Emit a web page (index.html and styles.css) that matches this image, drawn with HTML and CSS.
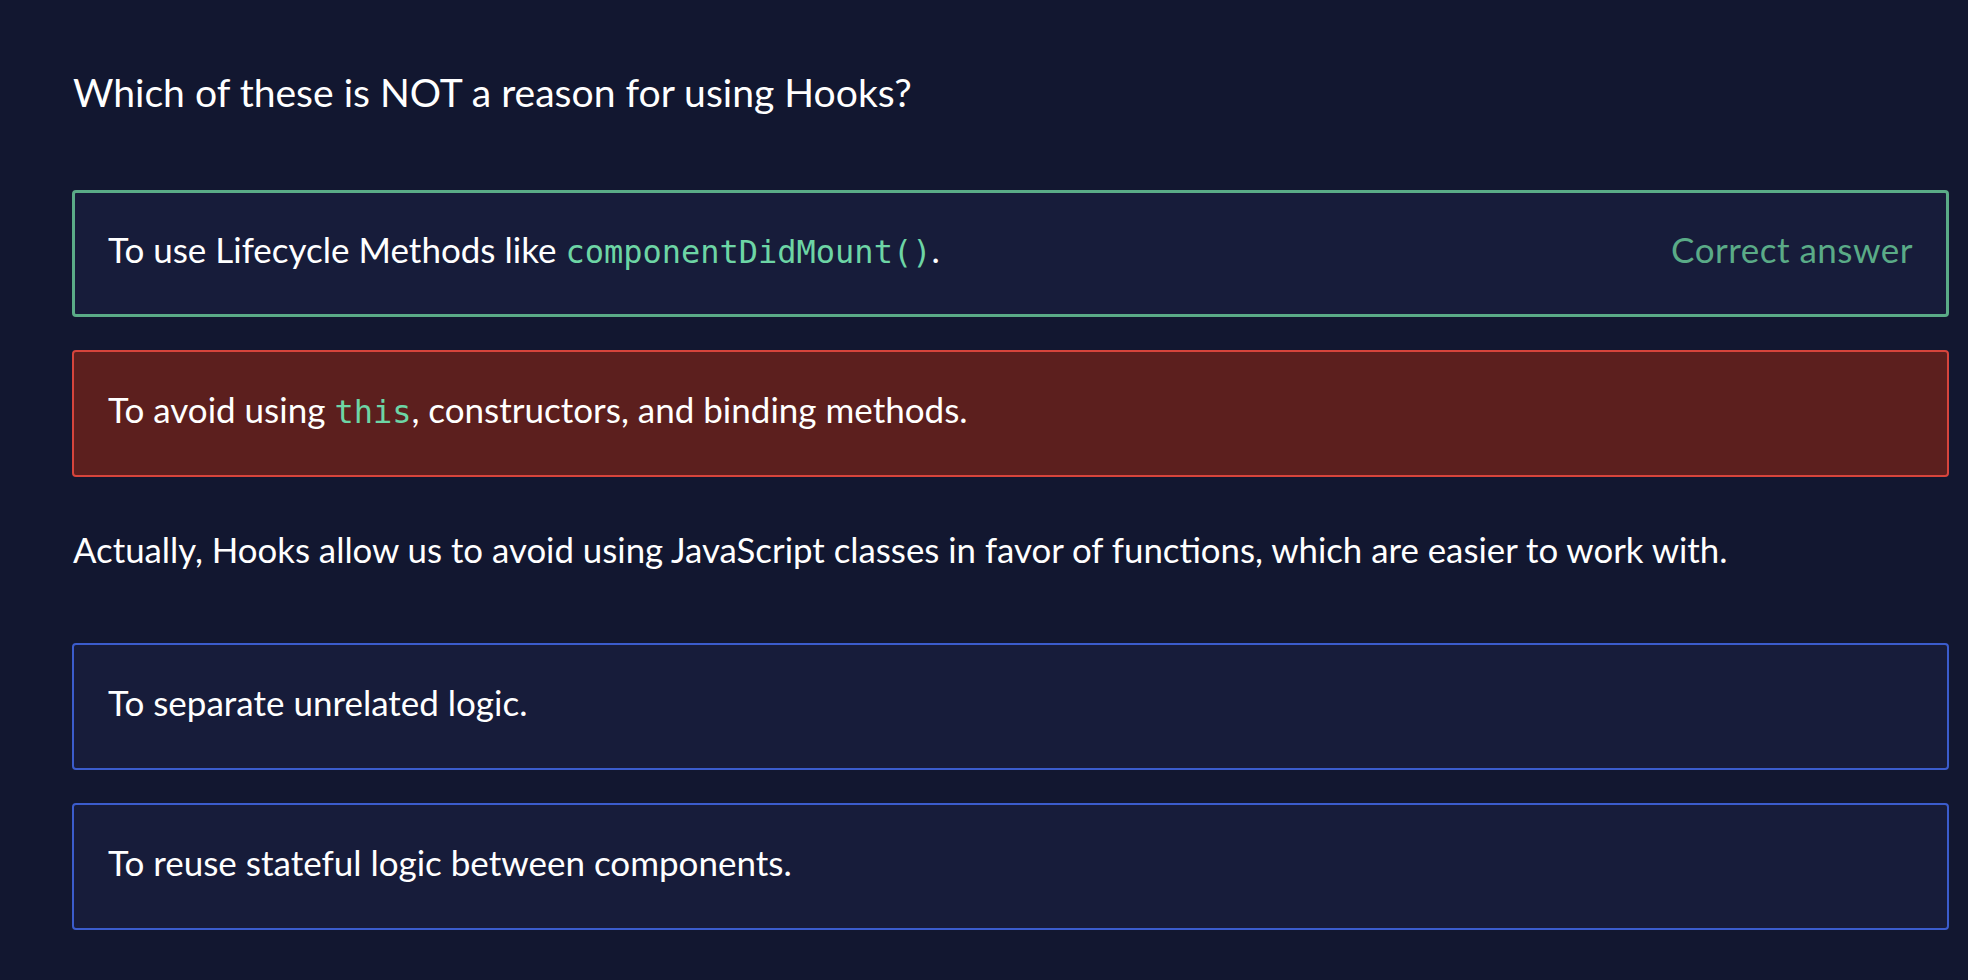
FILE: index.html
```html
<!DOCTYPE html>
<html lang="en">
<head>
<meta charset="utf-8">
<title>Hooks quiz</title>
<link rel="stylesheet" href="styles.css">
</head>
<body>
<main class="quiz">
  <h1 class="question">Which of these is NOT a reason for using Hooks?</h1>
  <div class="options">
    <div class="option option-correct">
      <span class="option-text">To use Lifecycle Methods like <code class="code">componentDidMount()</code>.</span>
      <span class="correct-label">Correct answer</span>
    </div>
    <div class="option option-wrong">
      <span class="option-text">To avoid using <code class="code">this</code>, constructors, and binding methods.</span>
    </div>
  </div>
  <p class="explanation">Actually, Hooks allow us to avoid using JavaScript classes in favor of functions, which are easier to work with.</p>
  <div class="options">
    <div class="option">
      <span class="option-text">To separate unrelated logic.</span>
    </div>
    <div class="option">
      <span class="option-text">To reuse stateful logic between components.</span>
    </div>
  </div>
</main>
</body>
</html>
```

FILE: styles.css
```css
* {
  box-sizing: border-box;
}

html, body {
  margin: 0;
  padding: 0;
  background: #121730;
}

body {
  font-family: "Lato", "Liberation Sans", sans-serif;
  color: #ffffff;
  width: 1968px;
  height: 980px;
  overflow: hidden;
}

.quiz {
  padding: 62px 19px 0 72px;
}

.question {
  margin: 0 0 68px 1px;
  font-size: 39.1px;
  line-height: 60px;
  font-weight: 400;
}

.options {
  display: flex;
  flex-direction: column;
  gap: 33px;
}

.option {
  display: flex;
  justify-content: space-between;
  align-items: baseline;
  height: 127px;
  padding: 32px 34px 40px;
  border: 2px solid #3b5ccc;
  border-radius: 4px;
  background: #171c3a;
  font-size: 35px;
  line-height: 51px;
}

.option-correct {
  border: 3px solid #5aab87;
  padding: 31px 33px 39px;
}

.option-wrong {
  border-color: #d6443c;
  background: #5c1f1e;
}

.code {
  font-family: "DejaVu Sans Mono", "Liberation Mono", monospace;
  font-size: 32px;
  color: #6dd5a5;
}

.correct-label {
  color: #5aab87;
  letter-spacing: 0.5px;
}

.explanation {
  margin: 47px 0 68px 1px;
  font-size: 34.8px;
  line-height: 51px;
}
```
